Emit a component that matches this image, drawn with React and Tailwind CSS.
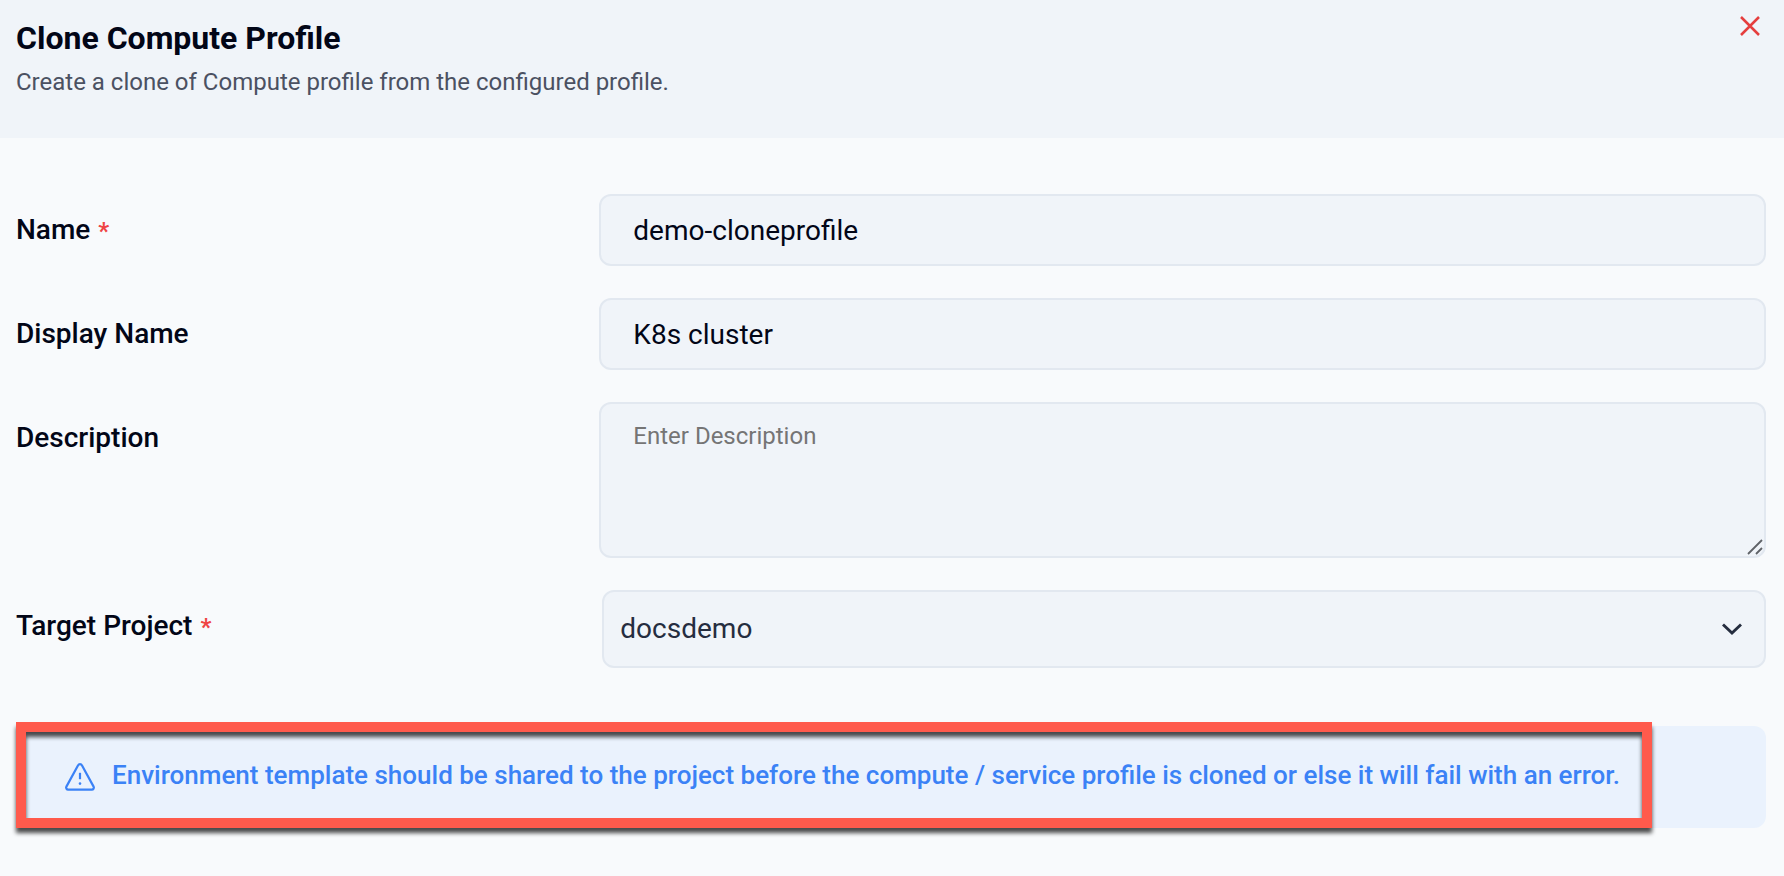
import React, { useState } from 'react';

const inputClass =
    'block w-full rounded-xl border-2 border-[#e2e8f0] bg-[#f0f4f9] px-8 text-[#020617] outline-none focus:border-slate-300';

const Label = ({ htmlFor, required, children }) => (
    <label htmlFor={htmlFor} className="pt-4 text-[28px] leading-10 font-medium text-[#020617]">
        {children}
        {required && <span className="ml-2 text-2xl font-bold text-[#ef4444]">*</span>}
    </label>
);

const WarningIcon = () => (
    <svg
        width="32"
        height="32"
        viewBox="0 0 32 32"
        fill="none"
        stroke="currentColor"
        strokeWidth="2.2"
        strokeLinecap="round"
        strokeLinejoin="round"
        className="shrink-0"
    >
        <path d="M4.2 28.6h23.6a2 2 0 0 0 1.8-3L17.9 4.3a2.1 2.1 0 0 0-3.8 0L2.4 25.6a2 2 0 0 0 1.8 3z" />
        <path d="M16 11.8v6.4" strokeLinecap="butt" />
        <circle cx="16" cy="22.6" r="1.3" fill="currentColor" stroke="none" />
    </svg>
);

const App = () => {
    const [name, setName] = useState('demo-cloneprofile');
    const [displayName, setDisplayName] = useState('K8s cluster');
    const [description, setDescription] = useState('');
    const [project, setProject] = useState('docsdemo');

    return (
        <div className="min-h-screen bg-[#f8fafc] font-['Roboto',sans-serif]">
            {/* Header */}
            <header className="flex items-start justify-between bg-[#f0f4f9] px-4 pt-4 pb-9">
                <div>
                    <h1 className="text-[32px] leading-11 font-bold text-[#020617]">Clone Compute Profile</h1>
                    <p className="pt-1 pb-0.5 text-2xl leading-9 text-[#4b5162]">
                        Create a clone of Compute profile from the configured profile.
                    </p>
                </div>
                <button type="button" aria-label="Close" className="mr-2 cursor-pointer text-[#e53e3e]">
                    <svg width="20" height="20" viewBox="0 0 20 20" fill="none" stroke="currentColor" strokeWidth="2.5">
                        <path d="M1 1l18 18M19 1L1 19" />
                    </svg>
                </button>
            </header>

            {/* Form */}
            <form className="flex flex-col gap-8 pt-14 pr-[18px] pb-12 pl-4">
                <div className="grid grid-cols-3">
                    <Label htmlFor="name" required>Name</Label>
                    <div className="col-span-2">
                        <input
                            id="name"
                            type="text"
                            value={name}
                            onChange={(e) => setName(e.target.value)}
                            className={`${inputClass} h-18 text-[28px]`}
                        />
                    </div>
                </div>

                <div className="grid grid-cols-3">
                    <Label htmlFor="displayName">Display Name</Label>
                    <div className="col-span-2">
                        <input
                            id="displayName"
                            type="text"
                            value={displayName}
                            onChange={(e) => setDisplayName(e.target.value)}
                            className={`${inputClass} h-18 text-[28px]`}
                        />
                    </div>
                </div>

                <div className="grid grid-cols-3">
                    <Label htmlFor="description">Description</Label>
                    <div className="relative col-span-2">
                        <textarea
                            id="description"
                            placeholder="Enter Description"
                            value={description}
                            onChange={(e) => setDescription(e.target.value)}
                            className={`${inputClass} h-39 resize-none py-3 text-2xl leading-10 placeholder:text-[#757575]`}
                        />
                        <svg
                            className="pointer-events-none absolute right-[3px] bottom-[3px] text-[#5f6368]"
                            width="16"
                            height="16"
                            viewBox="0 0 16 16"
                            fill="none"
                            stroke="currentColor"
                            strokeWidth="1.8"
                        >
                            <path d="M1 15L15 1M9 15l6-6" />
                        </svg>
                    </div>
                </div>

                <div className="grid grid-cols-3">
                    <Label htmlFor="project" required>Target Project</Label>
                    <div className="relative col-span-2 pl-[3px]">
                        <select
                            id="project"
                            value={project}
                            onChange={(e) => setProject(e.target.value)}
                            className="block h-[78px] w-full appearance-none rounded-xl border-2 border-[#e2e8f0] bg-[#f0f4f9] px-4 text-[28px] text-[#252d3f] outline-none"
                        >
                            <option value="docsdemo">docsdemo</option>
                        </select>
                        <svg
                            className="pointer-events-none absolute top-8 right-6 text-[#252d3f]"
                            width="20"
                            height="14"
                            viewBox="0 0 20 14"
                            fill="none"
                            stroke="currentColor"
                            strokeWidth="2.9"
                        >
                            <path d="M1 2.5l9 8.5 9-8.5" />
                        </svg>
                    </div>
                </div>

                {/* Notice */}
                <div role="alert" className="relative mt-[26px] flex h-[102px] items-center gap-4 rounded-xl bg-[#eaf2fd] px-12 text-[#3b82f6]">
                    <WarningIcon />
                    <p className="pb-1 text-[26px] leading-10 font-medium">
                        Environment template should be shared to the project before the compute / service profile is cloned or else it will fail with an error.
                    </p>
                    <div className="pointer-events-none absolute -top-1 right-[114px] bottom-0 left-0 border-10 border-[#ff5a4c] drop-shadow-[0_5px_2px_rgba(0,0,0,0.7)]" />
                </div>
            </form>
        </div>
    );
};

export default App;
